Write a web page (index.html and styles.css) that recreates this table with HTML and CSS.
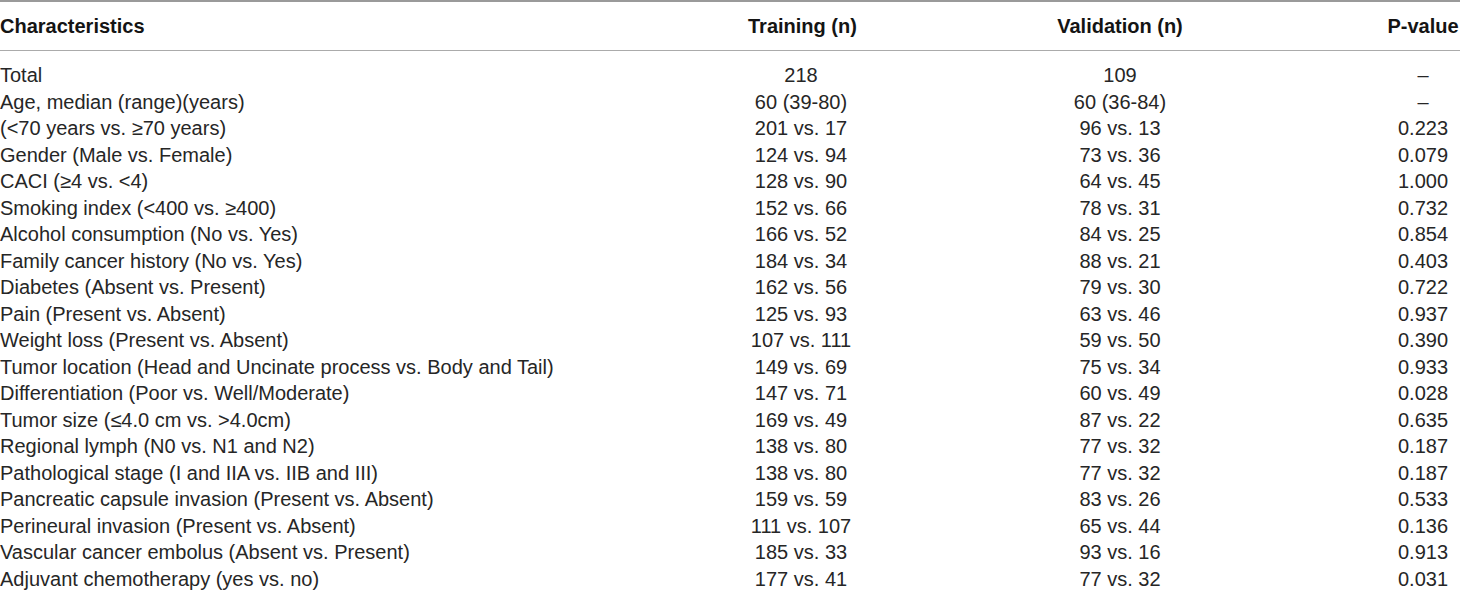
FILE: index.html
```html
<!DOCTYPE html>
<html>
<head>
<meta charset="utf-8">
<link rel="stylesheet" href="styles.css">
</head>
<body>
<table class="data">
  <colgroup>
    <col class="c1"><col class="c2"><col class="c3"><col class="c4">
  </colgroup>
  <thead>
    <tr><th class="left">Characteristics</th><th>Training (n)</th><th>Validation (n)</th><th>P-value</th></tr>
  </thead>
  <tbody>
    <tr class="first"><td class="left">Total</td><td>218</td><td>109</td><td>–</td></tr>
    <tr><td class="left">Age, median (range)(years)</td><td>60 (39-80)</td><td>60 (36-84)</td><td>–</td></tr>
    <tr><td class="left">(&lt;70 years vs. ≥70 years)</td><td>201 vs. 17</td><td>96 vs. 13</td><td>0.223</td></tr>
    <tr><td class="left">Gender (Male vs. Female)</td><td>124 vs. 94</td><td>73 vs. 36</td><td>0.079</td></tr>
    <tr><td class="left">CACI (≥4 vs. &lt;4)</td><td>128 vs. 90</td><td>64 vs. 45</td><td>1.000</td></tr>
    <tr><td class="left">Smoking index (&lt;400 vs. ≥400)</td><td>152 vs. 66</td><td>78 vs. 31</td><td>0.732</td></tr>
    <tr><td class="left">Alcohol consumption (No vs. Yes)</td><td>166 vs. 52</td><td>84 vs. 25</td><td>0.854</td></tr>
    <tr><td class="left">Family cancer history (No vs. Yes)</td><td>184 vs. 34</td><td>88 vs. 21</td><td>0.403</td></tr>
    <tr><td class="left">Diabetes (Absent vs. Present)</td><td>162 vs. 56</td><td>79 vs. 30</td><td>0.722</td></tr>
    <tr><td class="left">Pain (Present vs. Absent)</td><td>125 vs. 93</td><td>63 vs. 46</td><td>0.937</td></tr>
    <tr><td class="left">Weight loss (Present vs. Absent)</td><td>107 vs. 111</td><td>59 vs. 50</td><td>0.390</td></tr>
    <tr><td class="left">Tumor location (Head and Uncinate process vs. Body and Tail)</td><td>149 vs. 69</td><td>75 vs. 34</td><td>0.933</td></tr>
    <tr><td class="left">Differentiation (Poor vs. Well/Moderate)</td><td>147 vs. 71</td><td>60 vs. 49</td><td>0.028</td></tr>
    <tr><td class="left">Tumor size (≤4.0 cm vs. &gt;4.0cm)</td><td>169 vs. 49</td><td>87 vs. 22</td><td>0.635</td></tr>
    <tr><td class="left">Regional lymph (N0 vs. N1 and N2)</td><td>138 vs. 80</td><td>77 vs. 32</td><td>0.187</td></tr>
    <tr><td class="left">Pathological stage (I and IIA vs. IIB and III)</td><td>138 vs. 80</td><td>77 vs. 32</td><td>0.187</td></tr>
    <tr><td class="left">Pancreatic capsule invasion (Present vs. Absent)</td><td>159 vs. 59</td><td>83 vs. 26</td><td>0.533</td></tr>
    <tr><td class="left">Perineural invasion (Present vs. Absent)</td><td>111 vs. 107</td><td>65 vs. 44</td><td>0.136</td></tr>
    <tr><td class="left">Vascular cancer embolus (Absent vs. Present)</td><td>185 vs. 33</td><td>93 vs. 16</td><td>0.913</td></tr>
    <tr><td class="left">Adjuvant chemotherapy (yes vs. no)</td><td>177 vs. 41</td><td>77 vs. 32</td><td>0.031</td></tr>
  </tbody>
</table>
</body>
</html>
```
FILE: styles.css
```css
html, body {
  margin: 0;
  padding: 0;
  background: #ffffff;
}
body {
  font-family: "Liberation Sans", Arial, sans-serif;
  font-size: 20px;
  color: #262626;
}
.data {
  border-collapse: collapse;
  width: 1460px;
  table-layout: fixed;
  border-top: 2px solid #9a9a9a;
}
.c1 { width: 748px; }
.c2 { width: 106px; }
.c3 { width: 532px; }
.c4 { width: 74px; }
.data th {
  font-weight: bold;
  color: #141414;
  height: 48px;
  padding: 0;
  text-align: center;
  border-bottom: 1px solid #ababab;
  white-space: nowrap;
}
.data td {
  padding: 0;
  height: 26.5px;
  line-height: 26.5px;
  text-align: center;
  white-space: nowrap;
}
.data .first td {
  padding-top: 11px;
}
.data .left {
  text-align: left;
}
```
